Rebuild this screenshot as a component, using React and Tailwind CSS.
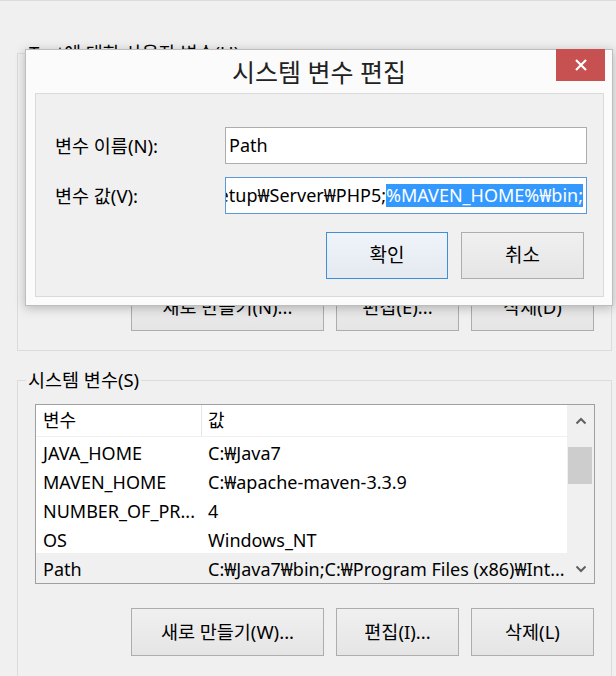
import React from "react";

function Chevron({ up }) {
  return (
    <svg width="12" height="8" viewBox="0 0 12 8" className="block">
      <polyline
        points={up ? "1.5,6.5 6,2 10.5,6.5" : "1.5,1.5 6,6 10.5,1.5"}
        fill="none"
        stroke="#606060"
        strokeWidth="2"
      />
    </svg>
  );
}

function WinButton({ children, className = "" }) {
  return (
    <div
      className={
        "flex items-center justify-center h-[48px] border border-[#adadad] bg-gradient-to-b from-[#f0f0f0] to-[#e5e5e5] text-[18.5px] text-[#000] " +
        className
      }
    >
      {children}
    </div>
  );
}

const rows = [
  ["JAVA_HOME", "C:₩Java7"],
  ["MAVEN_HOME", "C:₩apache-maven-3.3.9"],
  ["NUMBER_OF_PR...", "4"],
  ["OS", "Windows_NT"],
  ["Path", "C:₩Java7₩bin;C:₩Program Files (x86)₩Int..."],
];

export default function App() {
  return (
    <div className="relative w-[616px] h-[676px] overflow-hidden bg-[#f0f0f0] border-t border-[#dcdcdc] font-['Noto_Sans','Noto_Sans_CJK_KR',sans-serif] text-black">
      {/* background window content */}
      <div className="pt-[40px] pl-[17px] pr-[4px] flex flex-col">
        <fieldset className="border border-[#dcdcdc] p-0 m-0">
          <legend className="ml-[9px] px-[2px] text-[18.5px] leading-[24px]">
            Test에 대한 사용자 변수(U)
          </legend>
          <div className="h-[218px]" />
          <div className="flex justify-end gap-[12px] pr-[17px] pb-[19px]">
            <WinButton className="w-[193px]">새로 만들기(N)...</WinButton>
            <WinButton className="w-[123px]">편집(E)...</WinButton>
            <WinButton className="w-[123px]">삭제(D)</WinButton>
          </div>
        </fieldset>

        <fieldset className="mt-[17px] border border-[#dcdcdc] border-b-0 p-0 m-0 h-[320px]">
          <legend className="ml-[8px] px-[2px] text-[18.5px] leading-[24px]">
            시스템 변수(S)
          </legend>
          <div className="pt-[12px] pl-[17px]">
            <div className="w-[560px] h-[180px] border border-[#a0a0a0] bg-white flex">
              <div className="w-[531px] flex flex-col text-[18px]">
                <div className="h-[32px] flex border-b border-[#f0f0f0]">
                  <div className="w-[166px] pl-[7px] flex items-center border-r border-[#e5e5e5]">
                    변수
                  </div>
                  <div className="flex-1 pl-[6px] flex items-center">값</div>
                </div>
                {rows.map(([k, v], i) => (
                  <div
                    key={k}
                    className={
                      "flex items-center pt-[3px] " +
                      (i === rows.length - 1 ? "bg-[#f0f0f0] h-[30px]" : "h-[29px]")
                    }
                  >
                    <div className="w-[166px] pl-[7px] whitespace-nowrap overflow-hidden">{k}</div>
                    <div className="flex-1 pl-[6px] whitespace-nowrap overflow-hidden">{v}</div>
                  </div>
                ))}
              </div>
              <div className="w-[27px] bg-[#f0f0f0] flex flex-col">
                <div className="h-[32px] flex items-center justify-center">
                  <Chevron up />
                </div>
                <div className="flex-1">
                  <div className="mt-[10px] ml-[1px] w-[24px] h-[37px] bg-[#cdcdcd]" />
                </div>
                <div className="h-[29px] flex items-center justify-center">
                  <Chevron />
                </div>
              </div>
            </div>
            <div className="mt-[24px] flex justify-end gap-[12px] pr-[17px]">
              <WinButton className="w-[193px]">새로 만들기(W)...</WinButton>
              <WinButton className="w-[123px]">편집(I)...</WinButton>
              <WinButton className="w-[123px]">삭제(L)</WinButton>
            </div>
          </div>
        </fieldset>
      </div>

      {/* dialog window */}
      <div className="absolute left-[25px] top-[48px] w-[588px] h-[257px] bg-[#fbfbfb] border border-[#bdbdbd] shadow-[0_2px_10px_rgba(0,0,0,0.25)] flex flex-col">
        <div className="relative h-[43px] flex items-center justify-center">
          <span className="text-[25px] leading-none text-[#222] mt-[2px]">시스템 변수 편집</span>
          <div className="absolute top-[-1px] right-[7px] w-[49px] h-[32px] bg-[#c75050] flex items-center justify-center">
            <svg width="14" height="14" viewBox="0 0 14 14">
              <path d="M2 2 L12 12 M12 2 L2 12" stroke="#fff" strokeWidth="2.2" fill="none" />
            </svg>
          </div>
        </div>
        <div className="ml-[9px] mr-[8px] h-[204px] bg-[#f0f0f0] border border-[#dadada] pt-[33px]">
          <div className="flex items-center pl-[19px]">
            <div className="w-[170px] text-[18.5px]">변수 이름(N):</div>
            <div className="w-[362px] h-[37px] bg-white border border-[#abadb3] flex items-center pl-[3px] text-[18px]">
              Path
            </div>
          </div>
          <div className="flex items-center pl-[19px] mt-[13px]">
            <div className="w-[170px] text-[18.5px]">변수 값(V):</div>
            <div className="w-[362px] h-[37px] bg-white border border-[#5b9ad8] flex items-center justify-end pr-[3px] overflow-hidden text-[18px] whitespace-nowrap">
              <span className="shrink-0">C:₩Java7₩bin;C:₩APM_Setup₩Server₩PHP5;</span>
              <span className="shrink-0 bg-[#3399ff] text-white leading-[23px]">%MAVEN_HOME%₩bin;</span>
            </div>
          </div>
          <div className="flex justify-end gap-[13px] pr-[19px] mt-[18px]">
            <div className="w-[122px] h-[47px] flex items-center justify-center border border-[#3c8fd8] bg-gradient-to-b from-[#eef4fa] to-[#e5eaf0] text-[19px]">
              확인
            </div>
            <div className="w-[123px] h-[47px] flex items-center justify-center border border-[#adadad] bg-gradient-to-b from-[#f0f0f0] to-[#e5e5e5] text-[19px]">
              취소
            </div>
          </div>
        </div>
      </div>
    </div>
  );
}
